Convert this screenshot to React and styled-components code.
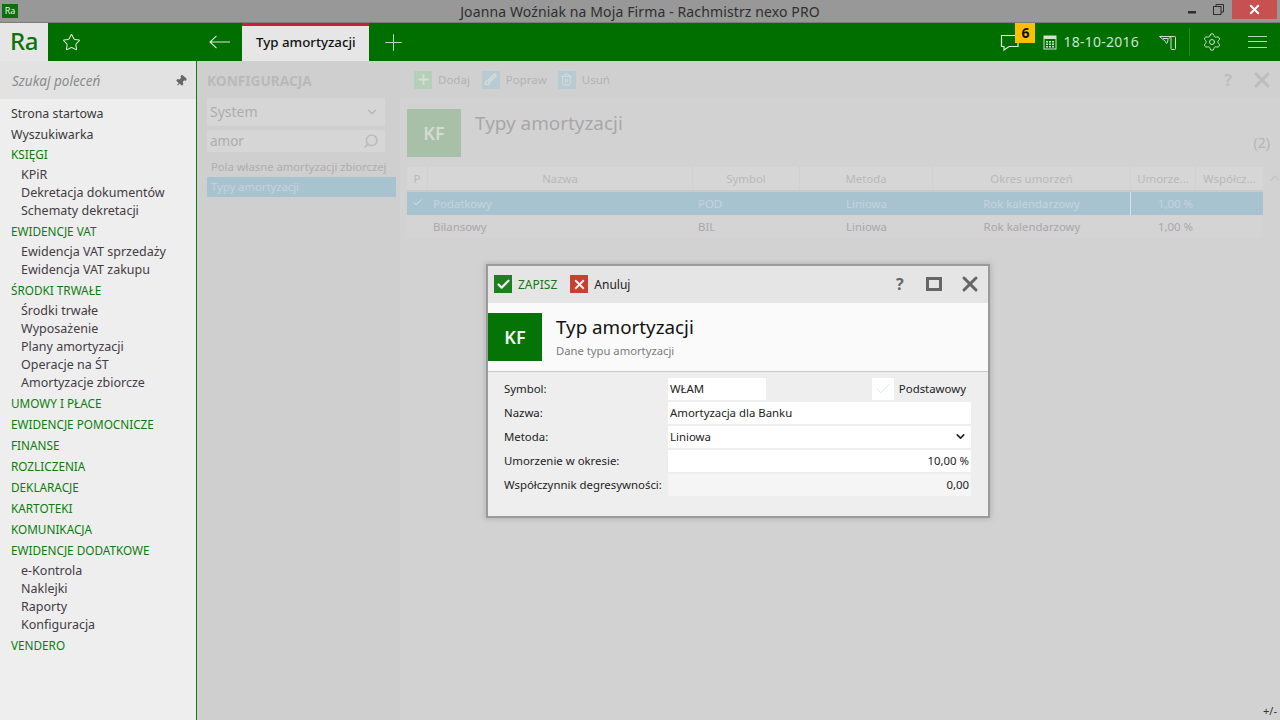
import React from 'react';
import styled, { createGlobalStyle } from 'styled-components';
import { Star, Pin, ChevronDown, ChevronUp, Search, Settings, Plus, Check, X, Trash2, Brush } from 'lucide-react';

const Global = createGlobalStyle`
  html, body { margin: 0; padding: 0; width: 1280px; height: 720px; overflow: hidden; }
  body { font-family: "Noto Sans", "Open Sans", sans-serif; font-size: 12.5px; }
  * { box-sizing: border-box; }
`;

const Win = styled.div`width:1280px;height:720px;display:flex;flex-direction:column;background:#d2d2d2;`;

const TitleBar = styled.div`
  height:23px;flex:none;background:#989898;border-bottom:1px solid #7c7c7c;display:flex;align-items:flex-start;position:relative;
`;
const AppBadge = styled.div`
  width:16px;height:14px;margin:4px 0 0 2px;background:#0d6f0d;color:#e8f3e8;font-size:9px;line-height:14px;text-align:center;
`;
const TitleText = styled.div`
  flex:1;text-align:center;font-size:14px;line-height:23px;color:#2f2f2f;margin-left:-18px;margin-right:-101px;letter-spacing:.12px;
`;
const WinButtons = styled.div`display:flex;align-items:flex-start;height:19px;`;
const WinBtn = styled.div`
  width:${p => p.$w}px;height:19px;display:flex;align-items:center;justify-content:center;background:${p => p.$bg || 'transparent'};
`;

const TopBar = styled.div`height:38px;flex:none;background:#006f00;display:flex;align-items:center;`;
const Logo = styled.div`
  width:48px;height:38px;background:#e6e6e6;color:#0a750a;font-weight:500;font-size:24px;line-height:36px;text-align:center;letter-spacing:-.5px;
`;
const StarSlot = styled.div`width:161px;padding-left:14px;display:flex;align-items:center;color:#dcebdc;`;
const BackSlot = styled.div`width:33px;display:flex;align-items:center;`;
const Tab = styled.div`
  width:127px;height:38px;background:#e6e6e6;border-top:3px solid #c8203c;color:#111;font-size:13.3px;font-weight:500;line-height:32px;padding-left:14px;white-space:nowrap;
`;
const PlusSlot = styled.div`width:48px;padding-left:11px;display:flex;align-items:center;color:#b9d8b9;`;
const Spacer = styled.div`flex:1;`;
const Chat = styled.div`width:43px;height:38px;position:relative;display:flex;align-items:center;color:#dcebdc;padding-top:2px;`;
const Badge = styled.div`
  position:absolute;left:15px;top:0;width:20px;height:20px;background:#ffbe00;color:#111;font-weight:700;font-size:14px;line-height:20px;text-align:center;
`;
const DateText = styled.div`margin:0 20px 2px 6px;font-size:14px;color:#c9e4d0;white-space:nowrap;letter-spacing:.25px;`;
const Divider = styled.div`width:1px;height:28px;background:#2c862c;margin:0 12px 0 13px;`;
const Hamburger = styled.div`
  width:19px;margin:0 13px 0 26px;height:12px;border-top:1.5px solid #b6d5b6;border-bottom:1.5px solid #b6d5b6;position:relative;
  &::after{content:"";position:absolute;left:0;right:0;top:3.7px;border-top:1.5px solid #b6d5b6;}
`;

const Body = styled.div`flex:1;display:flex;min-height:0;position:relative;`;

const Side = styled.aside`width:197px;flex:none;background:#eeeeee;border-right:1px solid #0f7a0f;display:flex;flex-direction:column;`;
const SideSearch = styled.div`
  height:38px;flex:none;background:#e2e2e2;display:flex;align-items:center;justify-content:space-between;padding:2px 9px 0 12px;
  color:#8c8c8c;font-style:italic;font-size:13.5px;
`;
const PinIcon = styled(Pin)`transform:rotate(40deg);`;
const Menu = styled.nav`padding-top:4px;display:flex;flex-direction:column;`;
const TopItem = styled.div`height:21px;line-height:${p => p.$g ? 19 : 22}px;padding-left:11px;color:${p => p.$g ? '#0c7d0c' : '#3a3a3a'};white-space:nowrap;font-size:${p => p.$g ? 11.75 : 12.4}px;`;
const SubList = styled.div`padding-bottom:2px;`;
const SubItem = styled.div`height:18px;line-height:18px;padding-left:21px;color:#443c44;white-space:nowrap;`;

const Config = styled.section`width:203px;flex:none;background:#cfcfcf;padding:0 4px 0 10px;display:flex;flex-direction:column;`;
const ConfigTitle = styled.div`height:37px;line-height:40px;font-size:13.7px;font-weight:700;color:#b9b9b9;`;
const SelectBox = styled.div`
  width:178px;height:28px;background:#d6d6d6;color:#adadad;font-size:14px;line-height:26px;padding:0 6px 0 3px;display:flex;align-items:center;justify-content:space-between;
`;
const SearchBox = styled(SelectBox)`height:22px;margin-top:4px;font-size:13.5px;`;
const ConfigItem = styled.div`
  height:20px;line-height:20px;margin-top:${p => p.$top || 0}px;padding-left:4px;font-size:11.25px;white-space:nowrap;
  background:${p => p.$sel ? '#a8c3d0' : 'transparent'};color:${p => p.$sel ? '#c5d3db' : '#b0adb0'};width:189px;
`;

const Main = styled.section`flex:1;display:flex;flex-direction:column;background:#d2d2d2;min-width:0;`;
const MainBar = styled.div`height:37px;flex:none;background:#d0d0d0;display:flex;align-items:center;padding:0 6px 0 14px;`;
const TIcon = styled.div`
  width:18px;height:18px;display:flex;align-items:center;justify-content:center;background:${p => p.$bg};color:#d4dfd6;
`;
const TLabel = styled.div`margin:0 ${p => p.$mr}px 0 6px;color:#b4b1b4;font-size:11.5px;`;
const Help = styled.div`font-weight:700;font-size:16px;color:#bdbdbd;margin-right:18px;`;
const MainHead = styled.div`height:69px;flex:none;padding:11px 10px 0 7px;display:flex;`;
const Tile = styled.div`
  width:54px;height:48px;flex:none;background:${p => p.$bg};color:${p => p.$fg};display:flex;align-items:center;justify-content:center;font-size:18px;font-weight:600;
`;
const MainTitle = styled.div`margin-left:14px;font-size:18.9px;line-height:28px;color:#a9a6a9;flex:1;`;
const Count = styled.div`font-size:14px;color:#b5b5b5;margin-top:24px;`;
const TableWrap = styled.div`position:relative;margin-left:7px;width:856px;`;
const cols = '21px 265px 107px 133px 198px 65px 67px';
const Head = styled.div`
  display:grid;grid-template-columns:${cols};height:25px;background:#d6d6d6;border-bottom:2px solid #cacaca;color:#b9b9b9;font-size:11.4px;
`;
const HCell = styled.div`
  line-height:23px;text-align:center;white-space:nowrap;overflow:hidden;border-right:1px dotted #cbcbcb;
  &:last-child{border-right:0;}
`;
const Row = styled.div`
  display:grid;grid-template-columns:${cols};height:23px;background:${p => p.$sel ? '#a8c3d0' : '#d4d4d4'};color:${p => p.$sel ? '#c6d4dc' : '#aaa6aa'};font-size:11.4px;line-height:23px;
`;
const Cell = styled.div`
  padding:0 ${p => p.$a === 'right' ? 3 : 5}px;text-align:${p => p.$a || 'left'};white-space:nowrap;position:relative;
  border-right:${p => p.$div ? '1px solid #d8e2e7' : '0'};
`;
const ScrollUp = styled.div`position:absolute;left:860px;top:3px;color:#c4c4c4;`;
const Status = styled.div`position:absolute;right:3px;bottom:2px;font-size:11px;color:#333;`;

const Modal = styled.div`
  position:absolute;left:486px;top:203px;width:504px;height:254px;border:2px solid #9a9a9a;background:#eeeeee;
  box-shadow:0 0 5px 1px rgba(160,160,160,.6);display:flex;flex-direction:column;
`;
const ModalBar = styled.div`height:37px;flex:none;background:#e5e5e5;display:flex;align-items:center;padding:0 6px 1px 6px;`;
const ActIcon = styled.div`width:18px;height:18px;background:${p => p.$bg};color:#f1f1f1;display:flex;align-items:center;justify-content:center;`;
const ActLabel = styled.div`margin:0 ${p => p.$mr}px 0 6px;color:${p => p.$c};font-size:12px;`;
const ModalHelp = styled.div`font-weight:700;font-size:16px;color:#666;width:30px;margin-left:1px;text-align:left;`;
const MaxBox = styled.div`width:16px;height:14px;border:3px solid #666;margin:0 16px 1px 0;`;
const ModalHead = styled.div`
  height:69px;flex:none;background:#fafafa;border-bottom:1px solid #c8c8c8;padding:10px 0 0;display:flex;
`;
const HeadText = styled.div`margin-left:14px;display:flex;flex-direction:column;`;
const HeadTitle = styled.div`font-size:18.8px;line-height:28px;color:#111;`;
const HeadSub = styled.div`font-size:11.25px;color:#7c7c7c;line-height:18px;margin-top:1px;`;
const Form = styled.div`padding:6px 17px 0 16px;display:flex;flex-direction:column;gap:2px;`;
const FRow = styled.div`display:flex;align-items:center;height:22px;`;
const FLabel = styled.label`width:164px;flex:none;font-size:11.4px;color:#222;white-space:nowrap;padding-bottom:2px;`;
const Input = styled.div`
  height:22px;background:${p => p.$ro ? '#f5f5f5' : '#fff'};width:${p => p.$w ? p.$w + 'px' : 'auto'};flex:${p => p.$w ? 'none' : 1};
  padding:0 2px 2px;font-size:11.4px;color:#222;text-align:${p => p.$a || 'left'};display:flex;justify-content:${p => p.$a === 'right' ? 'flex-end' : 'space-between'};align-items:center;
`;
const CheckBox = styled.div`width:22px;height:22px;background:#fff;margin-left:auto;color:#d5e3ea;display:flex;align-items:center;justify-content:center;`;
const CheckLabel = styled.div`margin:0 5px 2px 5px;font-size:11.4px;color:#222;`;

const Calendar = () => (
  <svg width="14" height="15" viewBox="0 0 14 15" fill="none">
    <rect x=".5" y=".5" width="13" height="14" fill="#cfe3d0" />
    <rect x="1.500" y="4" width="11" height="9.500" fill="#006f00" />
    <path d="M3 6h2v1.500H3zM6 6h2v1.500H6zM9 6h2v1.500H9zM3 8.500h2V10H3zM6 8.500h2V10H6zM9 8.500h2V10H9zM3 11h2v1.500H3zM6 11h2v1.500H6zM9 11h2v1.500H9z" fill="#cfe3d0" />
  </svg>
);
const Flag = () => (
  <svg width="17" height="15" viewBox="0 0 17 15" fill="none" stroke="#cfe3d0" strokeWidth="1">
    <path d="M.5 1.500h11.500L9 4.500l-.5 3L7.500 8.500l-1-2L.5 1.500z" />
    <rect x="12" y="1.500" width="4.500" height="13" rx=".8" />
    <path d="M4 3.500h5" />
  </svg>
);
const ChatIcon = () => (
  <svg width="20" height="20" viewBox="0 0 20 20" fill="none" stroke="#dcebdc" strokeWidth="1.2">
    <path d="M1.500 2.500h16.500v11h-9l-5 3.500v-3.500h-2.500z" />
  </svg>
);
const BackArrow = () => (
  <svg width="21" height="14" viewBox="0 0 21 14" fill="none" stroke="#dcebdc" strokeWidth="1.1">
    <path d="M21 7H1M7.500 .8L1 7l6.500 6.200" />
  </svg>
);

const Sub = ({ items }) => <SubList>{items.map(i => <SubItem key={i}>{i}</SubItem>)}</SubList>;

export default function App() {
  return (
    <Win>
      <Global />
      <TitleBar>
        <AppBadge>Ra</AppBadge>
        <TitleText>Joanna Woźniak na Moja Firma - Rachmistrz nexo PRO</TitleText>
        <WinButtons>
          <WinBtn $w={26}><svg width="8" height="19"><rect width="8" height="2.500" y="11" fill="#2d2d2d" /></svg></WinBtn>
          <WinBtn $w={27}><svg width="11" height="11" fill="none" stroke="#2d2d2d"><rect x=".5" y="2.500" width="7.500" height="8" /><path d="M3 2.500V.5h7.500v7.500h-2.500" /></svg></WinBtn>
          <WinBtn $w={45} $bg="#c75050"><X size={15} color="#fff" strokeWidth={3} /></WinBtn>
          <WinBtn $w={3} />
        </WinButtons>
      </TitleBar>
      <TopBar>
        <Logo>Ra</Logo>
        <StarSlot><Star size={19} strokeWidth={1.3} /></StarSlot>
        <BackSlot><BackArrow /></BackSlot>
        <Tab>Typ amortyzacji</Tab>
        <PlusSlot><Plus size={27} strokeWidth={.9} /></PlusSlot>
        <Spacer />
        <Chat><ChatIcon /><Badge>6</Badge></Chat>
        <Calendar />
        <DateText>18-10-2016</DateText>
        <Flag />
        <Divider />
        <Settings size={20} strokeWidth={1.2} color="#cfe3d0" />
        <Hamburger />
      </TopBar>
      <Body>
        <Side>
          <SideSearch>Szukaj poleceń<PinIcon size={12} fill="#666" color="#666" /></SideSearch>
          <Menu>
            <TopItem>Strona startowa</TopItem>
            <TopItem>Wyszukiwarka</TopItem>
            <TopItem $g>KSIĘGI</TopItem>
            <Sub items={['KPiR', 'Dekretacja dokumentów', 'Schematy dekretacji']} />
            <TopItem $g>EWIDENCJE VAT</TopItem>
            <Sub items={['Ewidencja VAT sprzedaży', 'Ewidencja VAT zakupu']} />
            <TopItem $g>ŚRODKI TRWAŁE</TopItem>
            <Sub items={['Środki trwałe', 'Wyposażenie', 'Plany amortyzacji', 'Operacje na ŚT', 'Amortyzacje zbiorcze']} />
            <TopItem $g>UMOWY I PŁACE</TopItem>
            <TopItem $g>EWIDENCJE POMOCNICZE</TopItem>
            <TopItem $g>FINANSE</TopItem>
            <TopItem $g>ROZLICZENIA</TopItem>
            <TopItem $g>DEKLARACJE</TopItem>
            <TopItem $g>KARTOTEKI</TopItem>
            <TopItem $g>KOMUNIKACJA</TopItem>
            <TopItem $g>EWIDENCJE DODATKOWE</TopItem>
            <Sub items={['e-Kontrola', 'Naklejki', 'Raporty', 'Konfiguracja']} />
            <TopItem $g>VENDERO</TopItem>
          </Menu>
        </Side>
        <Config>
          <ConfigTitle>KONFIGURACJA</ConfigTitle>
          <SelectBox>System<ChevronDown size={14} color="#b5b5b5" /></SelectBox>
          <SearchBox>amor<Search size={16} color="#bdbdbd" strokeWidth={2.6} style={{ transform: 'scaleX(-1)' }} /></SearchBox>
          <ConfigItem $top={5}>Pola własne amortyzacji zbiorczej</ConfigItem>
          <ConfigItem $sel>Typy amortyzacji</ConfigItem>
        </Config>
        <Main>
          <MainBar>
            <TIcon $bg="#b6cfb8"><Plus size={15} strokeWidth={3} /></TIcon><TLabel $mr={12}>Dodaj</TLabel>
            <TIcon $bg="#b8cad3"><Brush size={13} strokeWidth={2.4} /></TIcon><TLabel $mr={11}>Popraw</TLabel>
            <TIcon $bg="#b8cad3"><Trash2 size={13} strokeWidth={1.8} /></TIcon><TLabel $mr={0}>Usuń</TLabel>
            <Spacer />
            <Help>?</Help>
            <X size={24} strokeWidth={3} color="#bdbdbd" />
          </MainBar>
          <MainHead>
            <Tile $bg="#a8bfa8" $fg="#d4dcd4">KF</Tile>
            <MainTitle>Typy amortyzacji</MainTitle>
            <Count>(2)</Count>
          </MainHead>
          <TableWrap>
            <Head>
              <HCell>P</HCell><HCell>Nazwa</HCell><HCell>Symbol</HCell><HCell>Metoda</HCell><HCell>Okres umorzeń</HCell><HCell>Umorze...</HCell><HCell>Współcz...</HCell>
            </Head>
            <Row $sel>
              <Cell><Check size={11} color="#d8e4ea" /></Cell><Cell>Podatkowy</Cell><Cell>POD</Cell><Cell $a="center">Liniowa</Cell><Cell $a="center" $div>Rok kalendarzowy</Cell><Cell $a="right">1,00 %</Cell><Cell />
            </Row>
            <Row>
              <Cell /><Cell>Bilansowy</Cell><Cell>BIL</Cell><Cell $a="center">Liniowa</Cell><Cell $a="center">Rok kalendarzowy</Cell><Cell $a="right">1,00 %</Cell><Cell />
            </Row>
            <ScrollUp><ChevronUp size={16} /></ScrollUp>
          </TableWrap>
        </Main>
        <Status>+/-</Status>
        <Modal>
          <ModalBar>
            <ActIcon $bg="#1f7f1f"><Check size={15} strokeWidth={3.4} /></ActIcon><ActLabel $c="#137a13" $mr={13}>ZAPISZ</ActLabel>
            <ActIcon $bg="#c8402f"><X size={15} strokeWidth={3.2} /></ActIcon><ActLabel $c="#222" $mr={0}>Anuluj</ActLabel>
            <Spacer />
            <ModalHelp>?</ModalHelp>
            <MaxBox />
            <X size={24} strokeWidth={3} color="#666" />
          </ModalBar>
          <ModalHead>
            <Tile $bg="#067306" $fg="#f2f6f2">KF</Tile>
            <HeadText>
              <HeadTitle>Typ amortyzacji</HeadTitle>
              <HeadSub>Dane typu amortyzacji</HeadSub>
            </HeadText>
          </ModalHead>
          <Form>
            <FRow><FLabel>Symbol:</FLabel><Input $w={98}>WŁAM</Input><CheckBox><Check size={18} strokeWidth={1.2} /></CheckBox><CheckLabel>Podstawowy</CheckLabel></FRow>
            <FRow><FLabel>Nazwa:</FLabel><Input>Amortyzacja dla Banku</Input></FRow>
            <FRow><FLabel>Metoda:</FLabel><Input>Liniowa<ChevronDown size={13} strokeWidth={3} color="#222" style={{ marginRight: 2 }} /></Input></FRow>
            <FRow><FLabel>Umorzenie w okresie:</FLabel><Input $a="right">10,00 %</Input></FRow>
            <FRow><FLabel>Współczynnik degresywności:</FLabel><Input $a="right" $ro>0,00</Input></FRow>
          </Form>
        </Modal>
      </Body>
    </Win>
  );
}
